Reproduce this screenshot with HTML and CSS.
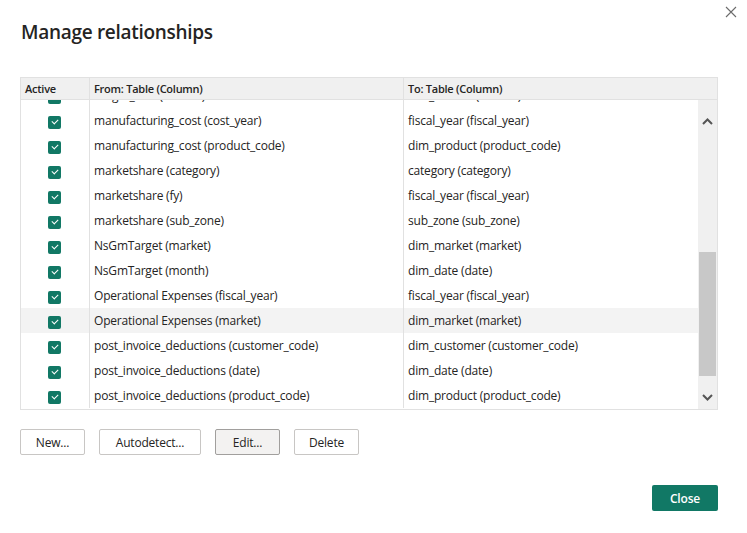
FILE: index.html
```html
<!DOCTYPE html>
<html>
<head>
<meta charset="utf-8">
<link rel="stylesheet" href="styles.css">
</head>
<body>
<div class="dialog">
  <button class="close-x" aria-label="Close">
    <svg width="12" height="12" viewBox="0 0 12 12"><path d="M1 1L11 11M11 1L1 11" stroke="#6b6b6b" stroke-width="1.1" fill="none"/></svg>
  </button>
  <h1 class="title">Manage relationships</h1>
  <div class="table">
    <div class="thead">
      <div class="cell c-active">Active</div>
      <div class="cell c-from">From: Table (Column)</div>
      <div class="cell c-to">To: Table (Column)</div>
    </div>
    <div class="tbody">
      <div class="rows">
        <div class="row"><div class="cell c-active"><span class="chk"></span></div><div class="cell c-from">freight_cost (market)</div><div class="cell c-to">dim_market (market)</div></div>
        <div class="row"><div class="cell c-active"><span class="chk"></span></div><div class="cell c-from">manufacturing_cost (cost_year)</div><div class="cell c-to">fiscal_year (fiscal_year)</div></div>
        <div class="row"><div class="cell c-active"><span class="chk"></span></div><div class="cell c-from">manufacturing_cost (product_code)</div><div class="cell c-to">dim_product (product_code)</div></div>
        <div class="row"><div class="cell c-active"><span class="chk"></span></div><div class="cell c-from">marketshare (category)</div><div class="cell c-to">category (category)</div></div>
        <div class="row"><div class="cell c-active"><span class="chk"></span></div><div class="cell c-from">marketshare (fy)</div><div class="cell c-to">fiscal_year (fiscal_year)</div></div>
        <div class="row"><div class="cell c-active"><span class="chk"></span></div><div class="cell c-from">marketshare (sub_zone)</div><div class="cell c-to">sub_zone (sub_zone)</div></div>
        <div class="row"><div class="cell c-active"><span class="chk"></span></div><div class="cell c-from">NsGmTarget (market)</div><div class="cell c-to">dim_market (market)</div></div>
        <div class="row"><div class="cell c-active"><span class="chk"></span></div><div class="cell c-from">NsGmTarget (month)</div><div class="cell c-to">dim_date (date)</div></div>
        <div class="row"><div class="cell c-active"><span class="chk"></span></div><div class="cell c-from">Operational Expenses (fiscal_year)</div><div class="cell c-to">fiscal_year (fiscal_year)</div></div>
        <div class="row hover"><div class="cell c-active"><span class="chk"></span></div><div class="cell c-from">Operational Expenses (market)</div><div class="cell c-to">dim_market (market)</div></div>
        <div class="row"><div class="cell c-active"><span class="chk"></span></div><div class="cell c-from">post_invoice_deductions (customer_code)</div><div class="cell c-to">dim_customer (customer_code)</div></div>
        <div class="row"><div class="cell c-active"><span class="chk"></span></div><div class="cell c-from">post_invoice_deductions (date)</div><div class="cell c-to">dim_date (date)</div></div>
        <div class="row"><div class="cell c-active"><span class="chk"></span></div><div class="cell c-from">post_invoice_deductions (product_code)</div><div class="cell c-to">dim_product (product_code)</div></div>
      </div>
      <div class="scrollbar">
        <div class="sb-arrow">
          <svg width="11" height="7" viewBox="0 0 11 7"><path d="M1 6L5.5 1.5L10 6" stroke="#555" stroke-width="2" fill="none"/></svg>
        </div>
        <div class="sb-track"><div class="sb-thumb"></div></div>
        <div class="sb-arrow">
          <svg width="11" height="7" viewBox="0 0 11 7"><path d="M1 1L5.5 5.5L10 1" stroke="#555" stroke-width="2" fill="none"/></svg>
        </div>
      </div>
    </div>
  </div>
  <div class="actions">
    <button class="btn w-new">New...</button>
    <button class="btn w-auto">Autodetect...</button>
    <button class="btn btn-active w-edit">Edit...</button>
    <button class="btn w-del">Delete</button>
  </div>
  <div class="footer">
    <button class="btn-primary">Close</button>
  </div>
</div>
</body>
</html>
```
FILE: styles.css
```css
* { box-sizing: border-box; }
html, body { margin: 0; padding: 0; background: #fff; }
body {
  font-family: "Open Sans", "Noto Sans", sans-serif;
  color: #252423;
  width: 747px;
  height: 533px;
  overflow: hidden;
}
.dialog {
  position: relative;
  padding: 18px 29px 0 20px;
}
.close-x {
  position: absolute;
  top: 5px;
  right: 9px;
  width: 14px;
  height: 14px;
  padding: 0;
  border: 0;
  background: transparent;
  display: flex;
  align-items: center;
  justify-content: center;
}
.title {
  margin: 0 0 0 1px;
  font-size: 19px;
  font-weight: 600;
  line-height: 28px;
  letter-spacing: -0.3px;
  color: #252423;
}
.table {
  margin-top: 31px;
  width: 698px;
  border: 1px solid #e1e1e1;
  font-size: 12px;
}
.thead {
  display: grid;
  grid-template-columns: 68px 314px 1fr;
  height: 22px;
  background: #f0f0f0;
  border-bottom: 1px solid #e1e1e1;
  font-weight: 600;
  font-size: 11px;
  position: relative;
  z-index: 1;
}
.thead .cell {
  display: flex;
  align-items: center;
  padding-left: 4px;
  letter-spacing: -0.25px;
}
.thead .c-from, .thead .c-to { border-left: 1px solid #e1e1e1; }
.tbody {
  display: flex;
  height: 309px;
  overflow: hidden;
}
.rows {
  flex: 1;
  margin-top: -17px;
}
.row {
  display: grid;
  grid-template-columns: 68px 314px 1fr;
  height: 25px;
}
.row.hover { background: #f3f3f3; }
.row .cell {
  display: flex;
  align-items: center;
  white-space: nowrap;
}
.row .c-active { justify-content: center; padding-right: 1px; }
.row .c-from, .row .c-to {
  border-left: 1px solid #e1e1e1;
  padding-left: 4px;
  letter-spacing: -0.2px;
}
.chk {
  width: 13px;
  height: 13px;
  border-radius: 2px;
  background: #117865;
  position: relative;
  margin-top: 3px;
}
.chk::after {
  content: "";
  position: absolute;
  width: 5px;
  height: 3px;
  border-left: 1.6px solid #fff;
  border-bottom: 1.6px solid #fff;
  transform: rotate(-45deg);
  transform-origin: center;
  top: 3.5px;
  left: 3.5px;
}
.scrollbar {
  width: 19px;
  background: #f0f0f0;
  display: flex;
  flex-direction: column;
  padding: 0 1px;
}
.sb-arrow {
  height: 24px;
  display: flex;
  align-items: center;
  justify-content: center;
}
.sb-arrow:first-child { margin-top: 9px; }
.sb-track {
  flex: 1;
  position: relative;
}
.sb-thumb {
  position: absolute;
  left: 0;
  right: 0;
  top: 119px;
  height: 124px;
  background: #c8c8c8;
}
.actions {
  display: flex;
  gap: 14px;
  margin-top: 19px;
}
.btn {
  height: 26px;
  border: 1px solid #c8c6c4;
  border-radius: 2px;
  background: #fff;
  font-family: "Open Sans", "Noto Sans", sans-serif;
  font-size: 12px;
  color: #252423;
  padding: 0;
  letter-spacing: -0.2px;
}
.btn-active { background: #f3f2f1; border-color: #a19f9d; }
.w-new { width: 65px; }
.w-auto { width: 102px; }
.w-edit { width: 65px; }
.w-del { width: 65px; }
.footer {
  display: flex;
  justify-content: flex-end;
  margin-top: 30px;
  width: 698px;
}
.btn-primary {
  width: 66px;
  height: 26px;
  border: 0;
  border-radius: 2px;
  background: #117865;
  color: #fff;
  font-family: "Open Sans", "Noto Sans", sans-serif;
  font-size: 12px;
  font-weight: 600;
  padding: 0;
  letter-spacing: -0.2px;
}
```
